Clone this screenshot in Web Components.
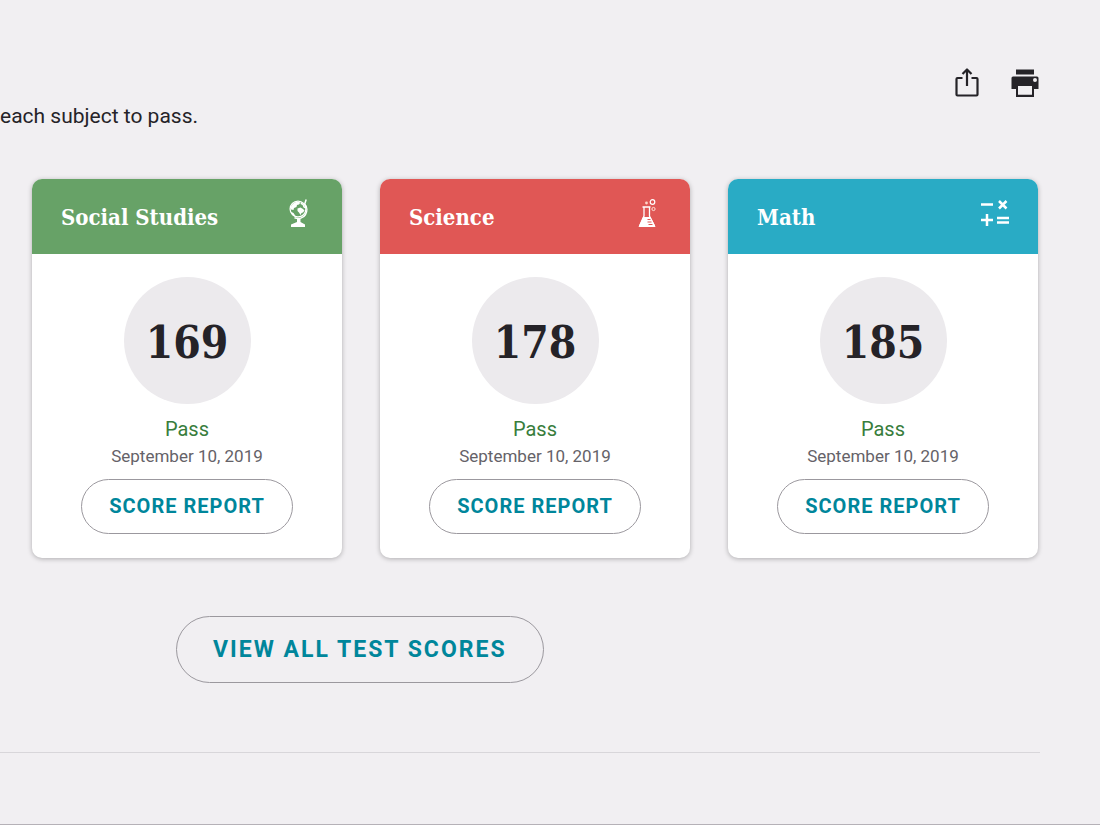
<!DOCTYPE html>
<html lang="en">
<head>
<meta charset="utf-8">
<meta name="viewport" content="width=device-width, initial-scale=1">
<title>Test Scores</title>
<style>
    body {
        margin: 0;
        background: #f1eff2;
        color: #252328;
        font-family: Roboto, "Liberation Sans", sans-serif;
        --slab-font: "Roboto Slab", "DejaVu Serif Condensed", "DejaVu Serif", serif;
        --link-color: #00869b;
        --outline: #9b989e;
    }
</style>
</head>
<body>
<scores-page>
    <page-toolbar slot="toolbar"></page-toolbar>
    <span slot="intro">each subject to pass.</span>
    <score-card subject="Social Studies" score="169" status="Pass" date="September 10, 2019" icon="globe" theme="green"></score-card>
    <score-card subject="Science" score="178" status="Pass" date="September 10, 2019" icon="flask" theme="red"></score-card>
    <score-card subject="Math" score="185" status="Pass" date="September 10, 2019" icon="math" theme="blue"></score-card>
    <pill-button slot="more" size="large">VIEW ALL TEST SCORES</pill-button>
</scores-page>

<script>
const icons = {
    globe: `
        <circle cx="13" cy="10" r="7.900" fill="none" stroke="#fff" stroke-width="1.300"/>
        <path fill="#fff" d="M6 7.500C7.500 4.500 10 2.800 13 2.700l2.500.8-1.500 2-2 .5-.5 2-2.500 1-.5 2-2.500-.5zM12.500 9.500l3-1 2.500 1.500 1.500 1.500-1.500 2-1.500.5-1 2-1.500-2.500-1.500-1.500zM16 3l3 2.500 1.500 4-2-1-1-2.500-2-1zM5.500 12.500l3 1.500 2 3-2.500-.5z"/>
        <path fill="none" stroke="#fff" stroke-width="1.500" d="M21.200.5l-1.500 4.500c2.800 3 2.600 7.500.8 10.500-2 3.500-6.500 5-11 3.300"/>
        <path fill="#fff" d="M12 19.500h3.500v3.500l4.500 2.500v2.500H6v-2.500l6-2.500z"/>`,
    flask: `
        <path fill="none" stroke="#fff" stroke-width="1.300" d="M9.500 8h8M11 8.500v8.500l-4.500 10h15l-5-10v-8.500"/>
        <path fill="#fff" d="M10 18h7.500l4.500 8.500c.5 1-.3 1.500-1 1.500H7c-1 0-1.200-.7-.8-1.500z"/>
        <path fill="none" stroke="#e05755" stroke-width="1" d="M14.500 20.500h3M14.500 23h4M15.500 25.500h4"/>
        <circle cx="19.500" cy="3" r="2.300" fill="none" stroke="#fff" stroke-width="1.200"/>
        <circle cx="20.500" cy="10" r="1.600" fill="none" stroke="#ffe1d6"/>
        <circle cx="13.500" cy="4" r="1.400" fill="#ffd5c8"/>`,
    math: `
        <path fill="none" stroke="#fff" stroke-width="2.500" d="M0 5.500h12M18 2l7.500 7.500M25.500 2l-7.500 7.500M0 21h12M6 15v12M16 19h12M16 23.500h12"/>`
};

/**
 * outlined pill button, size="large" for the page level one
 */
class pillButton extends HTMLElement {
    constructor() {
        super();
        this.attachShadow({mode: 'open'});
    }

    connectedCallback() {
        this.shadowRoot.innerHTML = `
            <style>
                :host {
                    display: inline-block;
                }

                button {
                    display: block;
                    box-sizing: border-box;
                    padding: 14px 27px 15px;
                    border: 1px solid var(--outline);
                    border-radius: 34px;
                    background: transparent;
                    color: var(--link-color);
                    font: 700 20px/24px Roboto, "Liberation Sans", sans-serif;
                    letter-spacing: 1px;
                    white-space: nowrap;
                    cursor: pointer;
                }

                :host([size="large"]) button {
                    padding: 18px 36px 17px;
                    font-size: 23px;
                    line-height: 30px;
                    letter-spacing: 2px;
                }
            </style>
            <button type="button"><slot></slot></button>
        `;
    }
}
customElements.define('pill-button', pillButton);

/**
 * share and print actions
 */
class pageToolbar extends HTMLElement {
    constructor() {
        super();
        this.attachShadow({mode: 'open'});
    }

    connectedCallback() {
        this.shadowRoot.innerHTML = `
            <style>
                :host {
                    display: flex;
                    justify-content: flex-end;
                    gap: 28px;
                }

                button {
                    padding: 0;
                    border: 0;
                    background: none;
                    color: inherit;
                    cursor: pointer;
                }

                svg {
                    display: block;
                    width: 30px;
                    height: 30px;
                }
            </style>
            <button type="button" aria-label="Share">
                <svg viewBox="0 0 30 30" fill="none" stroke="currentColor" stroke-width="2.200" stroke-linejoin="round">
                    <path d="M10.500 10H5.500a1 1 0 0 0-1 1v15.500a1 1 0 0 0 1 1h19a1 1 0 0 0 1-1V11a1 1 0 0 0-1-1h-5M15 18V2"/>
                    <path d="M10.500 6 15 1.500 19.500 6"/>
                </svg>
            </button>
            <button type="button" aria-label="Print">
                <svg viewBox="0 0 30 30" fill="currentColor">
                    <path d="M6 1.500h18v5H6z"/>
                    <path fill-rule="evenodd" d="M3 8.500h24a1.500 1.500 0 0 1 1.500 1.500v11H24v8H6v-8H1.500V10A1.500 1.500 0 0 1 3 8.500zm5 9.500v8.700h14V18zM25 10a2 2 0 1 0 0 4 2 2 0 0 0 0-4z"/>
                </svg>
            </button>
        `;
    }
}
customElements.define('page-toolbar', pageToolbar);

/**
 * card with the latest score of one subject
 */
class scoreCard extends HTMLElement {
    constructor() {
        super();
        this.attachShadow({mode: 'open'});
    }

    connectedCallback() {
        const subject = this.getAttribute('subject') || 'Subject';
        const score = this.getAttribute('score') || '';
        const status = this.getAttribute('status') || '';
        const date = this.getAttribute('date') || '';
        const icon = icons[this.getAttribute('icon')] || '';
        this.shadowRoot.innerHTML = `
            ${this.getStyles()}
            <header>
                <h2>${subject}</h2>
                <svg viewBox="0 0 28 28" aria-hidden="true">${icon}</svg>
            </header>
            <div class="body">
                <div class="score">${score}</div>
                <div class="status">${status}</div>
                <div class="date">${date}</div>
                <pill-button>SCORE REPORT</pill-button>
            </div>
        `;
    }

    getStyles() {
        return `
            <style>
                :host {
                    display: block;
                    --theme: #67a267;
                    overflow: hidden;
                    border-radius: 10px;
                    background: #fff;
                    box-shadow: 0 1px 5px rgba(0,0,0,0.28);
                }

                :host([theme="red"]) {
                    --theme: #e05755;
                }

                :host([theme="blue"]) {
                    --theme: #29abc5;
                }

                header {
                    display: flex;
                    align-items: flex-start;
                    justify-content: space-between;
                    padding: 20px 29px 19px;
                    background: var(--theme);
                    color: #fff;
                }

                h2 {
                    margin: 0;
                    font: 700 22px/36px var(--slab-font);
                }

                svg {
                    width: 28px;
                    height: 28px;
                }

                .body {
                    display: flex;
                    flex-direction: column;
                    align-items: center;
                    padding: 23px 16px 24px;
                }

                .score {
                    display: flex;
                    align-items: center;
                    justify-content: center;
                    box-sizing: border-box;
                    width: 127px;
                    height: 127px;
                    padding-top: 4px;
                    border-radius: 50%;
                    background: #eceaed;
                    font: 700 44px/56px var(--slab-font);
                }

                .status {
                    margin-top: 12px;
                    color: #387d3c;
                    font-size: 20px;
                    line-height: 26px;
                }

                .date {
                    margin-bottom: 9px;
                    color: #656268;
                    font-size: 17px;
                    line-height: 28px;
                }
            </style>
        `;
    }
}
customElements.define('score-card', scoreCard);

/**
 * page frame, cards go in the default slot
 */
class scoresPage extends HTMLElement {
    constructor() {
        super();
        this.attachShadow({mode: 'open'});
    }

    connectedCallback() {
        this.shadowRoot.innerHTML = `
            <style>
                :host {
                    display: block;
                    box-sizing: border-box;
                    min-height: 100vh;
                    padding-top: 68px;
                    border-bottom: 1px solid #b5b1b7;
                }

                .top {
                    padding-right: 60px;
                }

                p {
                    margin: 4px 0 49px;
                    font-size: 21px;
                    line-height: 28px;
                }

                .cards {
                    display: grid;
                    grid-template-columns: repeat(3, 1fr);
                    gap: 38px;
                    padding: 0 62px 0 32px;
                }

                .more {
                    padding: 58px 0 69px 176px;
                }

                hr {
                    margin: 0 60px 0 0;
                    border: 0;
                    border-top: 1px solid #d8d6da;
                }
            </style>
            <main>
                <div class="top"><slot name="toolbar"></slot></div>
                <p><slot name="intro"></slot></p>
                <div class="cards"><slot></slot></div>
                <div class="more"><slot name="more"></slot></div>
                <hr>
            </main>
        `;
    }
}
customElements.define('scores-page', scoresPage);
</script>
</body>
</html>
